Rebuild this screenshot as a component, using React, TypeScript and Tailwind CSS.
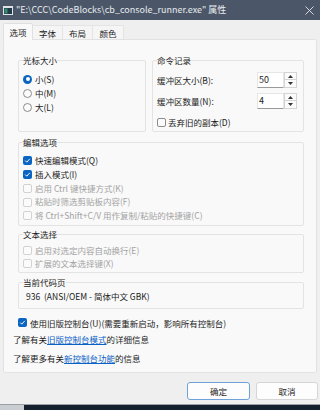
import React from "react";

function Check({ checked, disabled }: { checked?: boolean; disabled?: boolean }) {
  if (checked) {
    return (
      <span className="w-[9px] h-[9px] shrink-0 rounded-[2px] bg-[#0a64c2] flex items-center justify-center">
        <svg width="7" height="7" viewBox="0 0 8 8">
          <path d="M1.4 4.1 L3.2 5.9 L6.6 2.1" stroke="white" strokeWidth="1.1" fill="none" />
        </svg>
      </span>
    );
  }
  return (
    <span
      className={
        disabled
          ? "w-[9px] h-[9px] shrink-0 rounded-[2px] border border-[#d2d2d2] bg-[#fbfbfb]"
          : "w-[9px] h-[9px] shrink-0 rounded-[2px] border border-[#8c8c8c] bg-[#fbfbfb]"
      }
    />
  );
}

function Radio({ checked }: { checked?: boolean }) {
  if (checked) {
    return (
      <span className="w-[9px] h-[9px] shrink-0 rounded-full bg-[#0a64c2] flex items-center justify-center">
        <span className="w-[4px] h-[4px] rounded-full bg-white" />
      </span>
    );
  }
  return <span className="w-[9px] h-[9px] shrink-0 rounded-full border border-[#8c8c8c] bg-[#fbfbfb]" />;
}

function Group({
  title,
  className,
  children,
}: {
  title: string;
  className?: string;
  children: React.ReactNode;
}) {
  return (
    <fieldset className={"border border-[#e3e3e3] rounded-[2px] px-[4px] " + (className ?? "")}>
      <legend className="leading-[11px] text-[#1b1b1b]">{title}</legend>
      {children}
    </fieldset>
  );
}

function Spin({ value }: { value: string }) {
  return (
    <div className="flex h-[16px] mr-[2px]">
      <div className="w-[27px] h-[16px] bg-white border border-[#e6e6e6] border-b-[#9a9a9a] pl-[1px] text-[9px] leading-[14px] text-[#1b1b1b]">
        {value}
      </div>
      <div className="w-[13px] h-[16px] flex flex-col">
        <div className="h-[8px] border border-[#d4d4d4] bg-[#fbfbfb] flex items-center justify-center">
          <svg width="5" height="3" viewBox="0 0 5 3">
            <path d="M0 3 L2.5 0 L5 3 Z" fill="#333" />
          </svg>
        </div>
        <div className="h-[8px] border border-t-0 border-[#d4d4d4] bg-[#fbfbfb] flex items-center justify-center">
          <svg width="5" height="3" viewBox="0 0 5 3">
            <path d="M0 0 L2.5 3 L5 0 Z" fill="#333" />
          </svg>
        </div>
      </div>
    </div>
  );
}

export default function App() {
  const editItems: { t: string; c?: boolean; d?: boolean }[] = [
    { t: "快速编辑模式(Q)", c: true },
    { t: "插入模式(I)", c: true },
    { t: "启用 Ctrl 键快捷方式(K)", d: true },
    { t: "粘贴时筛选剪贴板内容(F)", d: true },
    { t: "将 Ctrl+Shift+C/V 用作复制/粘贴的快捷键(C)", d: true },
  ];
  return (
    <div className="w-[320px] h-[410px] overflow-hidden flex flex-col bg-[#15202e] font-['Noto_Sans_CJK_SC','Noto_Sans',sans-serif] text-[8.5px] text-[#1b1b1b]">
      <div className="h-[404px] flex flex-col bg-[#efefef]">
        {/* title bar */}
        <div className="h-[20px] shrink-0 bg-[#4b5768] flex items-center pl-[3px] pr-[3px]">
          <svg width="10" height="9" viewBox="0 0 10 9" className="shrink-0">
            <rect x="0" y="0" width="10" height="9" fill="#dfe3e6" />
            <rect x="1" y="2" width="8" height="6" fill="#1f3b4a" />
            <rect x="1.5" y="2.5" width="3" height="5" fill="#3a8a6a" />
          </svg>
          <span className="ml-[3px] text-[9px] leading-[12px] text-[#e9ecef] whitespace-pre">
            {'"E:\\CCC\\CodeBlocks\\cb_console_runner.exe" 属性'}
          </span>
          <div className="flex-1" />
          <svg width="9" height="9" viewBox="0 0 9 9" className="mr-[3px]">
            <path d="M0.5 0.5 L8.5 8.5 M8.5 0.5 L0.5 8.5" stroke="#e4e7ea" strokeWidth="0.9" />
          </svg>
        </div>

        {/* body */}
        <div className="px-[3px]">
          <div className="flex items-end mt-[3px]">
            <div className="relative z-10 -mb-px w-[30px] h-[17px] bg-[#f9f9f9] border border-b-0 border-[#e0e0e0] rounded-t-[2px] flex items-center justify-center leading-[12px]">
              选项
            </div>
            <div className="w-[30px] h-[14px] bg-[#f5f5f5] border-t border-r border-[#e4e4e4] flex items-center justify-center leading-[12px]">
              字体
            </div>
            <div className="w-[30px] h-[14px] bg-[#f5f5f5] border-t border-r border-[#e4e4e4] flex items-center justify-center leading-[12px]">
              布局
            </div>
            <div className="w-[31px] h-[14px] bg-[#f5f5f5] border-t border-r border-[#e4e4e4] flex items-center justify-center leading-[12px]">
              颜色
            </div>
          </div>

          <div className="h-[334px] bg-[#f9f9f9] border border-[#e2e2e2] rounded-[2px] pl-[9px] pr-[12px] pt-[15px]">
            <div className="pl-[5px]">
              <div className="flex gap-[6px]">
                <Group title="光标大小" className="w-[128px] h-[77px]">
                  <div className="pt-[6px] flex flex-col">
                    <div className="flex items-center gap-[3px] leading-[14px]">
                      <Radio checked />
                      <span>小(S)</span>
                    </div>
                    <div className="flex items-center gap-[3px] leading-[14px]">
                      <Radio />
                      <span>中(M)</span>
                    </div>
                    <div className="flex items-center gap-[3px] leading-[14px]">
                      <Radio />
                      <span>大(L)</span>
                    </div>
                  </div>
                </Group>
                <Group title="命令记录" className="flex-1 h-[77px]">
                  <div className="pt-[6px] flex flex-col">
                    <div className="flex items-center justify-between h-[16px]">
                      <span>缓冲区大小(B):</span>
                      <Spin value="50" />
                    </div>
                    <div className="flex items-center justify-between h-[16px] mt-[5px]">
                      <span>缓冲区数量(N):</span>
                      <Spin value="4" />
                    </div>
                    <div className="flex items-center gap-[2px] leading-[14px] mt-[6px]">
                      <Check />
                      <span>丢弃旧的副本(D)</span>
                    </div>
                  </div>
                </Group>
              </div>

              <Group title="编辑选项" className="mt-[5px] pb-[2px]">
                <div className="pt-[6px] flex flex-col">
                  {editItems.map((it) => (
                    <div key={it.t} className="flex items-center gap-[3px] leading-[13.75px]">
                      <Check checked={it.c} disabled={it.d} />
                      <span className={it.d ? "text-[#a3a3a3] whitespace-pre" : "whitespace-pre"}>{it.t}</span>
                    </div>
                  ))}
                </div>
              </Group>

              <Group title="文本选择" className="mt-[3px] pb-[2px]">
                <div className="pt-[4px] flex flex-col">
                  <div className="flex items-center gap-[3px] leading-[13px]">
                    <Check disabled />
                    <span className="text-[#a3a3a3]">启用对选定内容自动换行(E)</span>
                  </div>
                  <div className="flex items-center gap-[3px] leading-[13px]">
                    <Check disabled />
                    <span className="text-[#a3a3a3]">扩展的文本选择键(X)</span>
                  </div>
                </div>
              </Group>

              <Group title="当前代码页" className="mt-[4px] pb-[5px]">
                <div className="pt-[1px] pl-[3px] leading-[14px] whitespace-pre">936  (ANSI/OEM - 简体中文 GBK)</div>
              </Group>

              <div className="mt-[7px] flex items-center gap-[3px] leading-[14px]">
                <Check checked />
                <span>使用旧版控制台(U)(需要重新启动，影响所有控制台)</span>
              </div>
            </div>

            <div className="mt-[2px] leading-[14px]">
              了解有关<span className="text-[#0b62c6] underline">旧版控制台模式</span>的详细信息
            </div>
            <div className="mt-[5px] leading-[14px]">
              了解更多有关<span className="text-[#0b62c6] underline">新控制台功能</span>的信息
            </div>
          </div>
        </div>

        {/* footer */}
        <div className="mt-[9px] flex justify-end gap-[6px] pr-[2px]">
          <div className="w-[63px] h-[18px] bg-[#fdfdfd] border border-[#6fa3d8] rounded-[3px] flex items-center justify-center leading-[12px]">
            确定
          </div>
          <div className="w-[62px] h-[18px] bg-[#fdfdfd] border border-[#d6d6d6] rounded-[3px] flex items-center justify-center leading-[12px]">
            取消
          </div>
        </div>
      </div>
      <div className="flex-1 flex border-t border-[#9aa0a6]">
        <div className="w-[24px] bg-[#c9cdd2]" />
        <div className="flex-1 bg-[#15202e]" />
      </div>
    </div>
  );
}
